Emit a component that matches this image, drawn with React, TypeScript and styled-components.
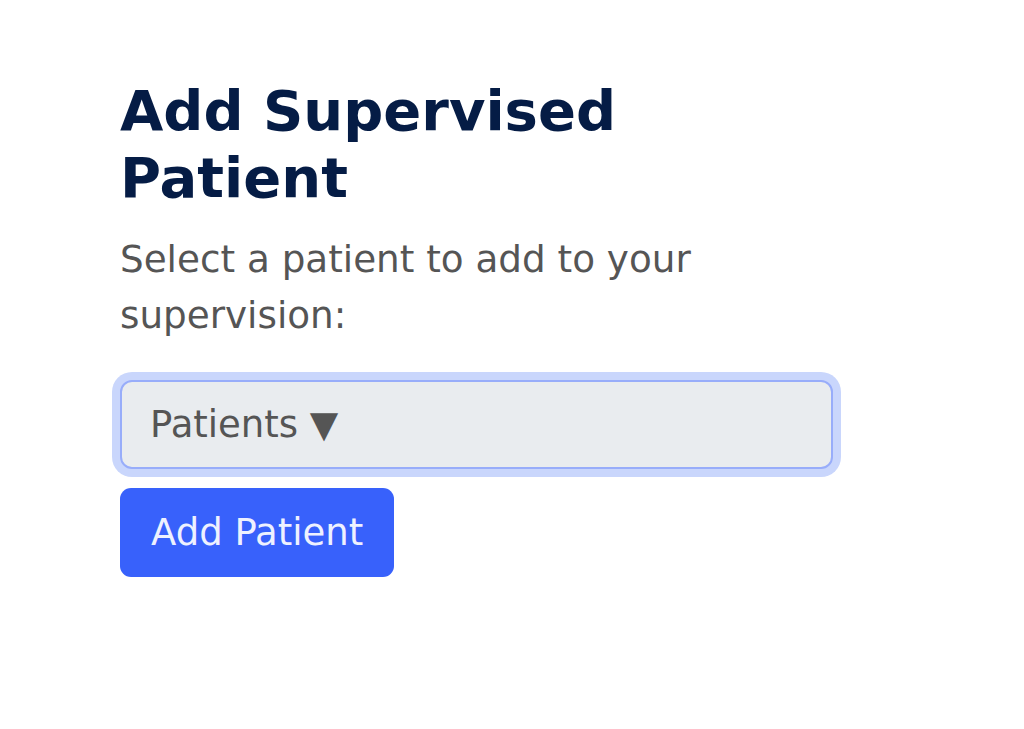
import styled, { createGlobalStyle } from "styled-components";

const GlobalStyle = createGlobalStyle`
  body {
    margin: 0;
    background: #ffffff;
    font-family: "DejaVu Sans", "Liberation Sans", sans-serif;
  }
`;

const Page = styled.div`
  padding: 77px 0 0 120px;
`;

const Panel = styled.div`
  width: 713px;
  display: flex;
  flex-direction: column;
  align-items: stretch;
`;

const Title = styled.h1`
  margin: 0;
  font-size: 56px;
  line-height: 67px;
  font-weight: bold;
  color: #051c45;
`;

const Subtitle = styled.p`
  margin: 20px 0 0;
  font-size: 37.3px;
  line-height: 56px;
  color: #555555;
`;

const DropdownToggle = styled.button`
  margin-top: 37px;
  box-sizing: border-box;
  height: 89px;
  padding: 0 28px;
  border: 2px solid #98adfa;
  border-radius: 12px;
  background: #e9ecef;
  box-shadow: 0 0 0 8px #c9d6fc;
  font-family: inherit;
  font-size: 37px;
  color: #555555;
  text-align: left;
  outline: none;
`;

const SubmitButton = styled.button`
  align-self: flex-start;
  margin-top: 19px;
  box-sizing: border-box;
  height: 89px;
  padding: 0 31px;
  border: none;
  border-radius: 11px;
  background: #3861fb;
  color: #eef1ff;
  font-family: inherit;
  font-size: 37px;
  line-height: 55px;
`;

const AddSupervisedPatient: React.FC<{}> = () => {
  return (
    <Page>
      <GlobalStyle />
      <Panel>
        <Title>Add Supervised Patient</Title>
        <Subtitle>Select a patient to add to your supervision:</Subtitle>
        <DropdownToggle type="button">Patients ▼</DropdownToggle>
        <SubmitButton type="button">Add Patient</SubmitButton>
      </Panel>
    </Page>
  );
};

export default AddSupervisedPatient;
